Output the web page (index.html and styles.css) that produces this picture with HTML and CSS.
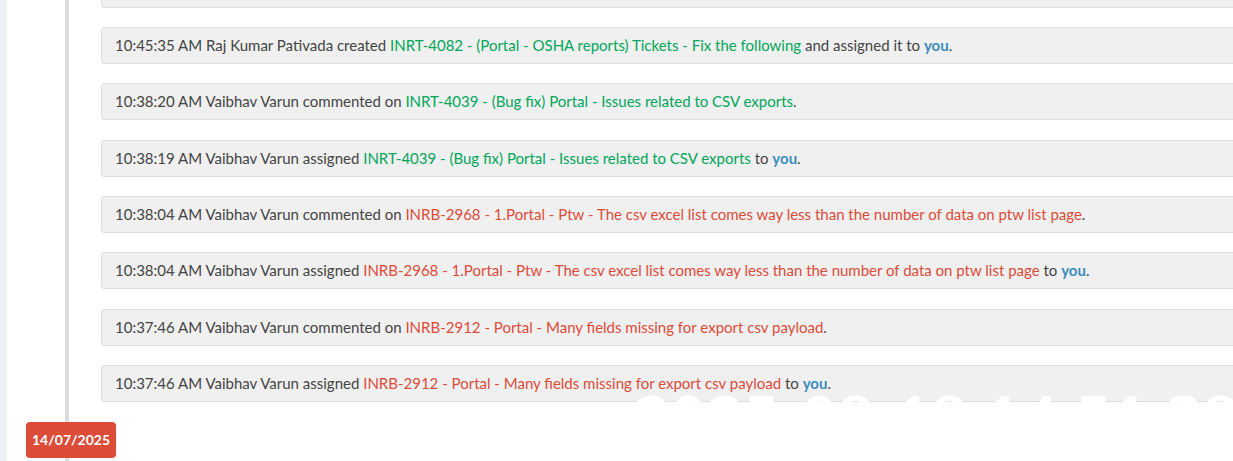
FILE: index.html
```html
<!DOCTYPE html>
<html lang="en">
<head>
<meta charset="utf-8">
<title>Timeline</title>
<link rel="stylesheet" href="styles.css">
</head>
<body>
<div class="page">
  <aside class="side-strip"></aside>
  <main class="content">
    <ul class="timeline">
      <li class="item"><div class="header">&nbsp;</div></li>
      <li class="item"><div class="header">10:45:35 AM Raj Kumar Pativada created <a class="link-green" href="#">INRT-4082 - (Portal - OSHA reports) Tickets - Fix the following</a> and assigned it to <a class="you" href="#">you</a>.</div></li>
      <li class="item"><div class="header">10:38:20 AM Vaibhav Varun commented on <a class="link-green" href="#">INRT-4039 - (Bug fix) Portal - Issues related to CSV exports</a>.</div></li>
      <li class="item"><div class="header">10:38:19 AM Vaibhav Varun assigned <a class="link-green" href="#">INRT-4039 - (Bug fix) Portal - Issues related to CSV exports</a> to <a class="you" href="#">you</a>.</div></li>
      <li class="item"><div class="header">10:38:04 AM Vaibhav Varun commented on <a class="link-red" href="#">INRB-2968 - 1.Portal - Ptw - The csv excel list comes way less than the number of data on ptw list page</a>.</div></li>
      <li class="item"><div class="header">10:38:04 AM Vaibhav Varun assigned <a class="link-red" href="#">INRB-2968 - 1.Portal - Ptw - The csv excel list comes way less than the number of data on ptw list page</a> to <a class="you" href="#">you</a>.</div></li>
      <li class="item"><div class="header">10:37:46 AM Vaibhav Varun commented on <a class="link-red" href="#">INRB-2912 - Portal - Many fields missing for export csv payload</a>.</div></li>
      <li class="item"><div class="header">10:37:46 AM Vaibhav Varun assigned <a class="link-red" href="#">INRB-2912 - Portal - Many fields missing for export csv payload</a> to <a class="you" href="#">you</a>.</div></li>
      <li class="time-label"><span class="date-badge">14/07/2025</span></li>
    </ul>
    <div class="watermark">2025-08-18 14:51:38</div>
  </main>
</div>
</body>
</html>
```

FILE: styles.css
```css
html, body {
  margin: 0;
  padding: 0;
  background: #ffffff;
  overflow: hidden;
  height: 461px;
}

body {
  font-family: "Lato", "Liberation Sans", sans-serif;
  font-size: 15px;
  color: #444444;
}

.page {
  display: flex;
  height: 461px;
}

.side-strip {
  width: 7px;
  flex: 0 0 7px;
  background: #ecf0f5;
}

.content {
  flex: 1;
  position: relative;
  background: #ffffff;
  overflow: hidden;
}

.timeline {
  position: relative;
  list-style: none;
  margin: -29.3px 0 0 0;
  padding: 0;
}

.timeline::before {
  content: "";
  position: absolute;
  top: 0;
  bottom: -40px;
  left: 58px;
  width: 4px;
  background: #dddddd;
}

.item {
  margin: 0 -20px 19.33px 94px;
}

.header {
  position: relative;
  height: 35px;
  line-height: 35px;
  padding: 0 0 0 13px;
  background: #f0f0f0;
  border: 1px solid #dddddd;
  border-radius: 3px 0 0 3px;
  white-space: nowrap;
}

.header a {
  text-decoration: none;
}

.link-green {
  color: #00a65a;
}

.link-red {
  color: #dd4b39;
}

.you {
  color: #3c8dbc;
  font-weight: 700;
}

.time-label {
  position: relative;
  margin: 0 0 0 19px;
  padding-top: 0.7px;
  font-size: 14px;
}

.date-badge {
  display: inline-block;
  background: #dd4b39;
  color: #ffffff;
  font-weight: 700;
  border-radius: 4px;
  height: 36px;
  line-height: 36px;
  padding: 0 6px;
  width: 78px;
  text-align: center;
}

.watermark {
  position: absolute;
  left: 627px;
  top: 377px;
  color: #ffffff;
  font-family: "Open Sans", sans-serif;
  font-weight: 600;
  font-size: 64px;
  line-height: 80px;
  white-space: nowrap;
  z-index: 2;
}
```
